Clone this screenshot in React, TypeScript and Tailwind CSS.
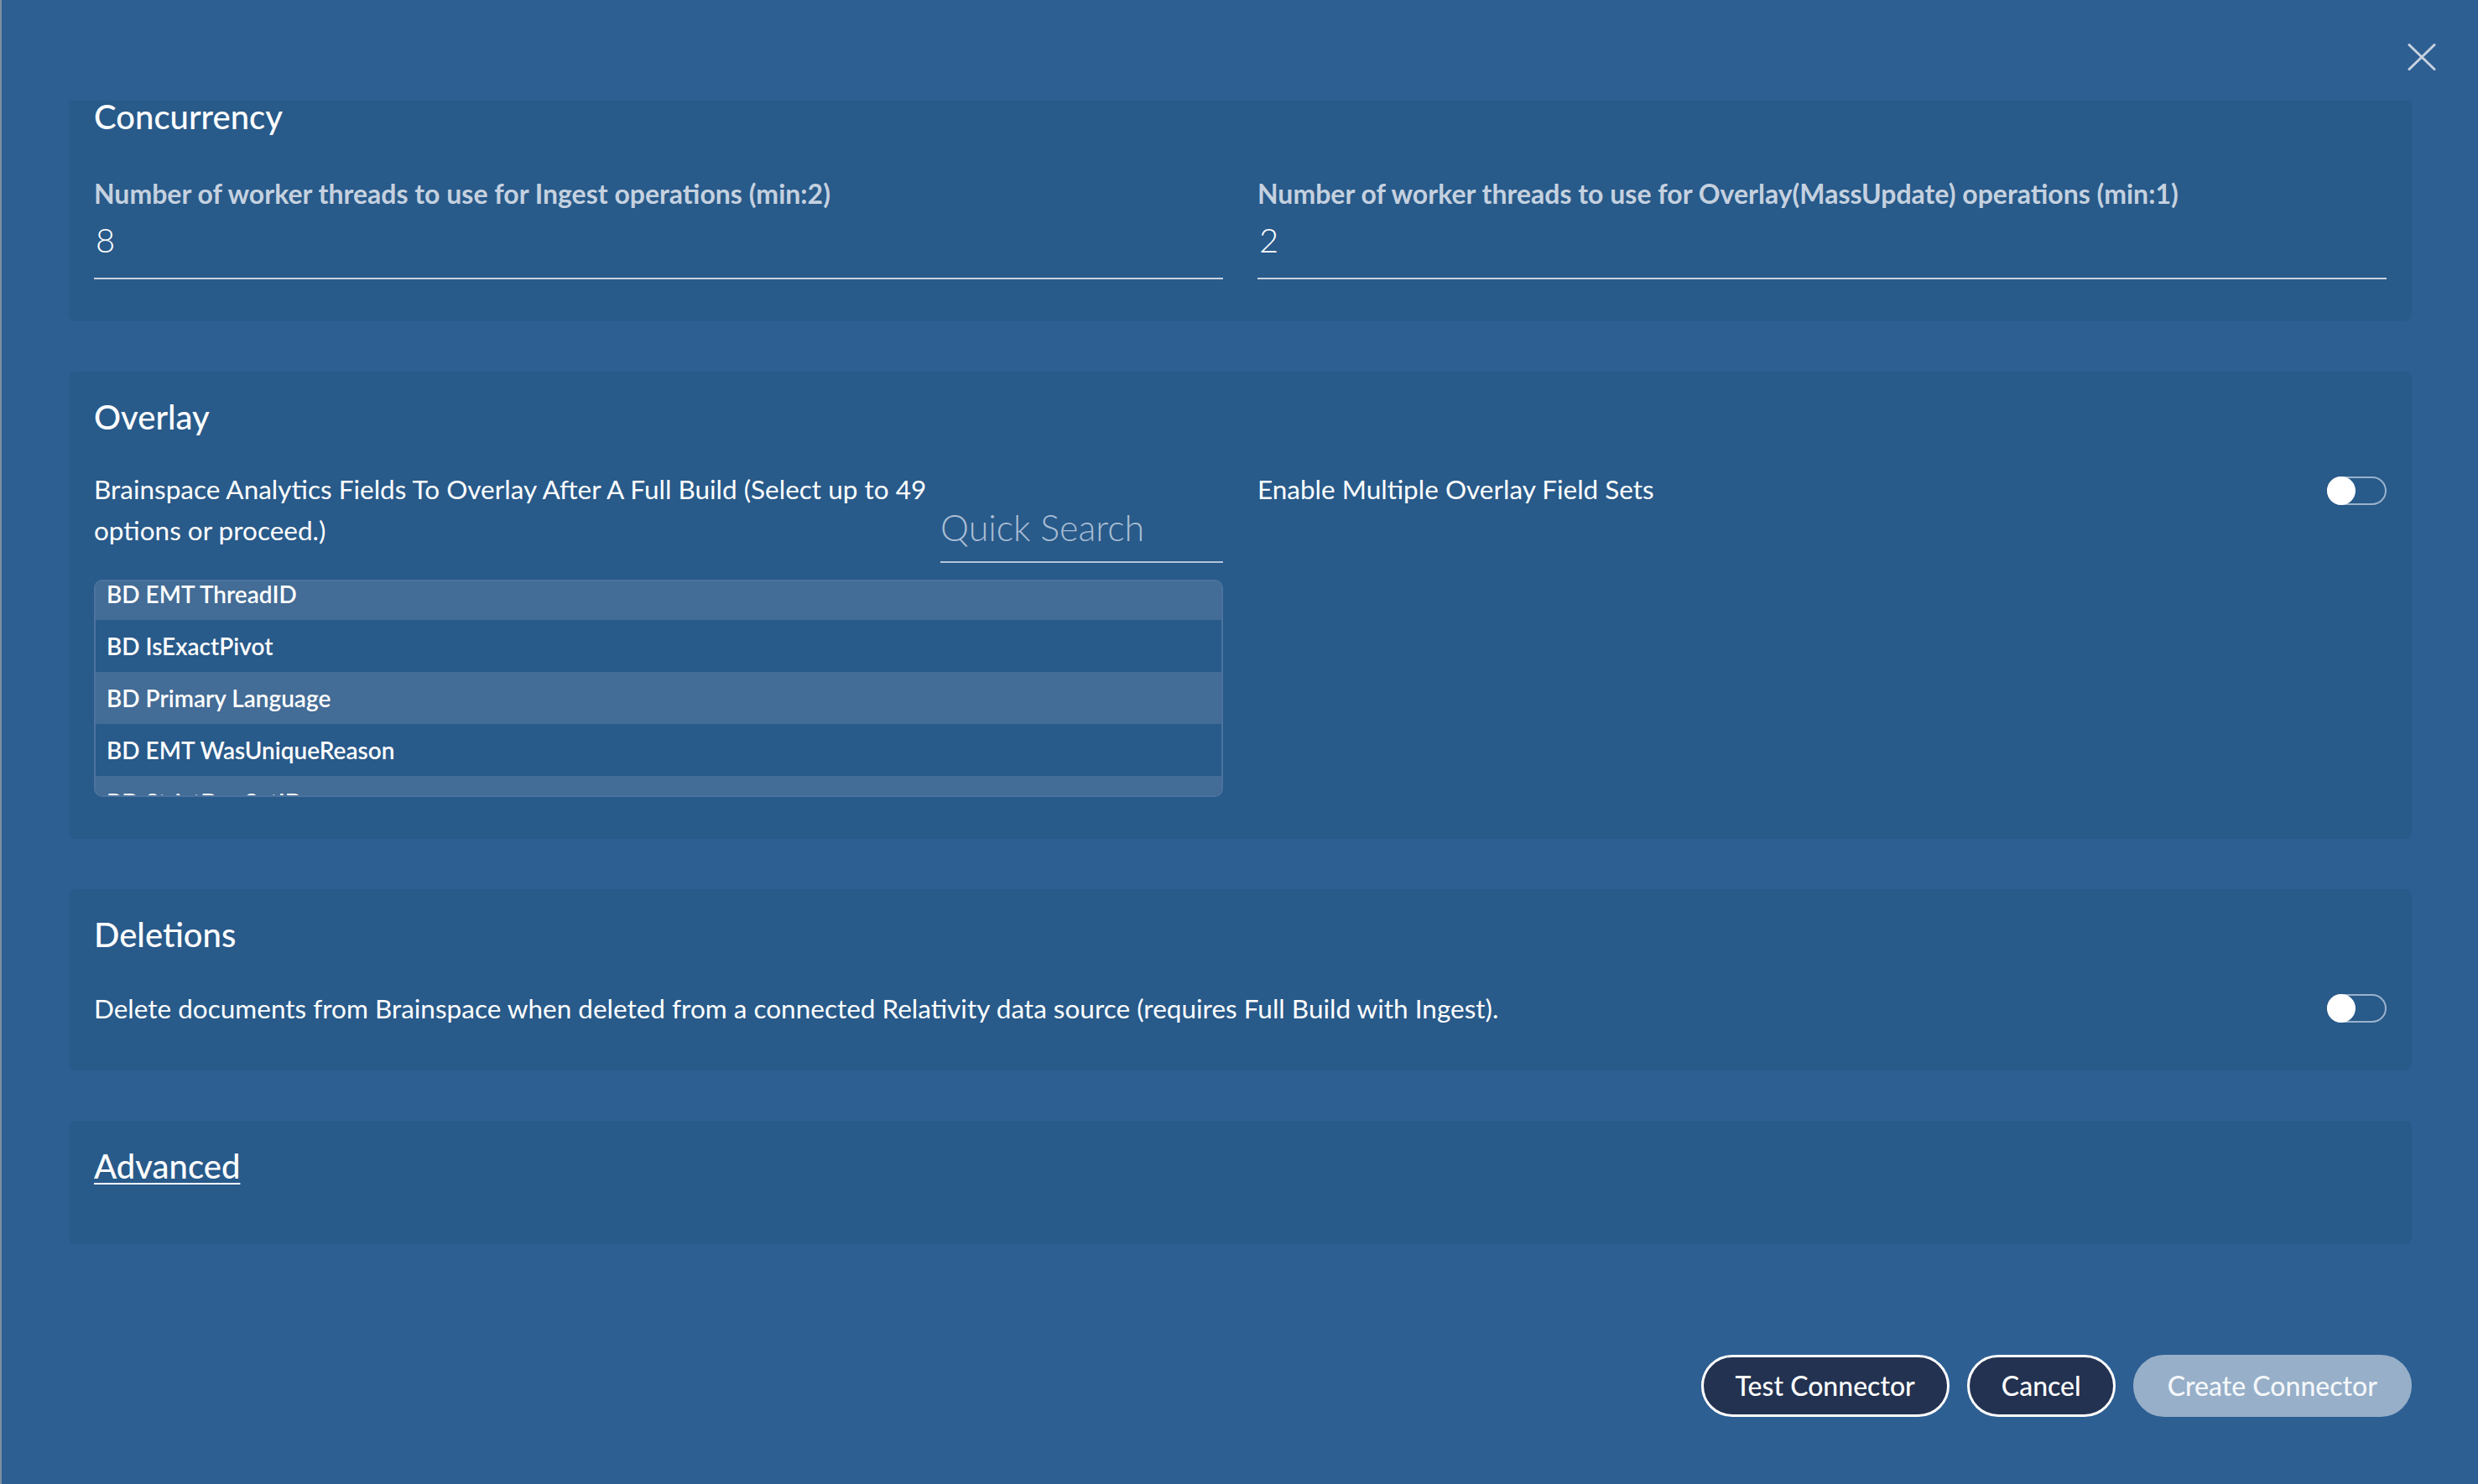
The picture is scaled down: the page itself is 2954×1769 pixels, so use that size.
import { useState } from "react";

const fields = [
  "BD EMT ThreadID",
  "BD IsExactPivot",
  "BD Primary Language",
  "BD EMT WasUniqueReason",
  "BD StrictDupSetID",
  "BD EMT IsUnique",
  "BD NearDupSetID",
];

function Toggle({ on, onChange }: { on: boolean; onChange: (v: boolean) => void }) {
  return (
    <button
      onClick={() => onChange(!on)}
      className={`relative h-[34px] w-[71px] shrink-0 rounded-full border-2 border-[#9bb2cb] ${on ? "bg-[#97afc8]" : "bg-transparent"}`}
    >
      <span
        className={`absolute top-[-2px] h-[34px] w-[34px] rounded-full bg-white ${on ? "right-[-2px]" : "left-[-2px]"}`}
      />
    </button>
  );
}

export default function App() {
  const [ingest, setIngest] = useState("8");
  const [overlay, setOverlay] = useState("2");
  const [search, setSearch] = useState("");
  const [multi, setMulti] = useState(false);
  const [deletions, setDeletions] = useState(false);

  return (
    <div className="flex h-screen flex-col overflow-hidden border-l-2 border-[#7f8fa0] bg-[#2d5f93] font-['Lato',sans-serif] text-white">
      <header className="flex h-[120px] shrink-0 justify-end pr-[50px] pt-[52px]">
        <button aria-label="Close" className="h-[32px] w-[34px]">
          <svg viewBox="0 0 34 32" className="h-[32px] w-[34px]" fill="none" stroke="#c8d3e0" strokeWidth="3" strokeLinecap="round">
            <path d="M2 1.5 L32 30.5 M32 1.5 L2 30.5" />
          </svg>
        </button>
      </header>

      <div className="h-[1400px] shrink-0 overflow-hidden pl-[80px] pr-[79px]">
        <div className="-mt-[35px] flex flex-col gap-[60px]">
          {/* Concurrency */}
          <section className="rounded-[8px] bg-[#285a8a] px-[30px] pb-[50px] pt-[30px]">
            <h2 className="text-[40px] font-medium leading-[48px]">Concurrency</h2>
            <div className="mt-[50px] grid grid-cols-2 gap-x-[41px]">
              <label className="block">
                <span className="block text-[32px] font-bold leading-[36px] text-[#c5d1df]">
                  Number of worker threads to use for Ingest operations (min:2)
                </span>
                <input
                  value={ingest}
                  onChange={(e) => setIngest(e.target.value)}
                  className="mt-[13px] block h-[71px] w-full border-b-2 border-[#c8d3e0] bg-transparent pb-[21px] pl-[2px] text-[40px] font-light leading-[48px] text-white outline-none"
                />
              </label>
              <label className="block">
                <span className="block text-[32px] font-bold leading-[36px] text-[#c5d1df]">
                  Number of worker threads to use for Overlay(MassUpdate) operations (min:1)
                </span>
                <input
                  value={overlay}
                  onChange={(e) => setOverlay(e.target.value)}
                  className="mt-[13px] block h-[71px] w-full border-b-2 border-[#c8d3e0] bg-transparent pb-[21px] pl-[2px] text-[40px] font-light leading-[48px] text-white outline-none"
                />
              </label>
            </div>
          </section>

          {/* Overlay */}
          <section className="rounded-[8px] bg-[#285a8a] px-[30px] pb-[50px] pt-[30px]">
            <h2 className="text-[40px] font-medium leading-[48px]">Overlay</h2>
            <div className="mt-[38px] grid grid-cols-2 gap-x-[41px]">
              <div>
                <div className="flex items-start">
                  <p className="flex-1 pr-[8px] text-[31.5px] leading-[49px]">
                    Brainspace Analytics Fields To Overlay After A Full Build (Select up to 49 options or proceed.)
                  </p>
                  <div className="w-[337px] pt-[43px]">
                    <input
                      value={search}
                      onChange={(e) => setSearch(e.target.value)}
                      placeholder="Quick Search"
                      className="block h-[69px] w-full border-b-2 border-[#b4c5d8] bg-transparent pb-[14px] text-[43px] font-light leading-[53px] text-white outline-none placeholder:text-[#a9bdd3]"
                    />
                  </div>
                </div>
                <div className="mt-[20px] h-[259px] overflow-hidden rounded-[10px] border-2 border-[#4d73a0]">
                  <ul className="-mt-[16px]">
                    {fields
                      .filter((f) => f.toLowerCase().includes(search.toLowerCase()))
                      .map((f, i) => (
                        <li
                          key={f}
                          className={`flex h-[62px] items-center pl-[13px] text-[28px] font-semibold ${i % 2 === 0 ? "bg-[#436c96]" : "bg-[#285a8a]"}`}
                        >
                          {f}
                        </li>
                      ))}
                  </ul>
                </div>
              </div>
              <div className="flex items-start justify-between">
                <span className="text-[31.5px] leading-[49px]">Enable Multiple Overlay Field Sets</span>
                <div className="mt-[9px]">
                  <Toggle on={multi} onChange={setMulti} />
                </div>
              </div>
            </div>
          </section>

          {/* Deletions */}
          <section className="rounded-[8px] bg-[#285a8a] px-[30px] pb-[50px] pt-[30px]">
            <h2 className="text-[40px] font-medium leading-[48px]">Deletions</h2>
            <div className="mt-[40px] flex items-center justify-between">
              <span className="text-[31.5px] leading-[48px]">
                Delete documents from Brainspace when deleted from a connected Relativity data source (requires Full Build with Ingest).
              </span>
              <Toggle on={deletions} onChange={setDeletions} />
            </div>
          </section>

          {/* Advanced */}
          <section className="rounded-[8px] bg-[#285a8a] px-[30px] pb-[69px] pt-[30px]">
            <h2 className="text-[40px] font-medium leading-[48px]">
              <a href="#" className="underline decoration-2 underline-offset-[5px]">
                Advanced
              </a>
            </h2>
          </section>
        </div>
      </div>

      <footer className="flex justify-end gap-[21px] pr-[79px] pt-[95px]">
        <button className="h-[74px] rounded-full border-[3px] border-white bg-[#233250] px-[38px] text-[32px] font-medium text-white">
          Test Connector
        </button>
        <button className="h-[74px] rounded-full border-[3px] border-white bg-[#233250] px-[38px] text-[32px] font-medium text-white">
          Cancel
        </button>
        <button className="h-[74px] rounded-full border-[3px] border-[#97afc8] bg-[#97afc8] px-[38px] text-[32px] font-medium text-[#f4f7fa]">
          Create Connector
        </button>
      </footer>
    </div>
  );
}
